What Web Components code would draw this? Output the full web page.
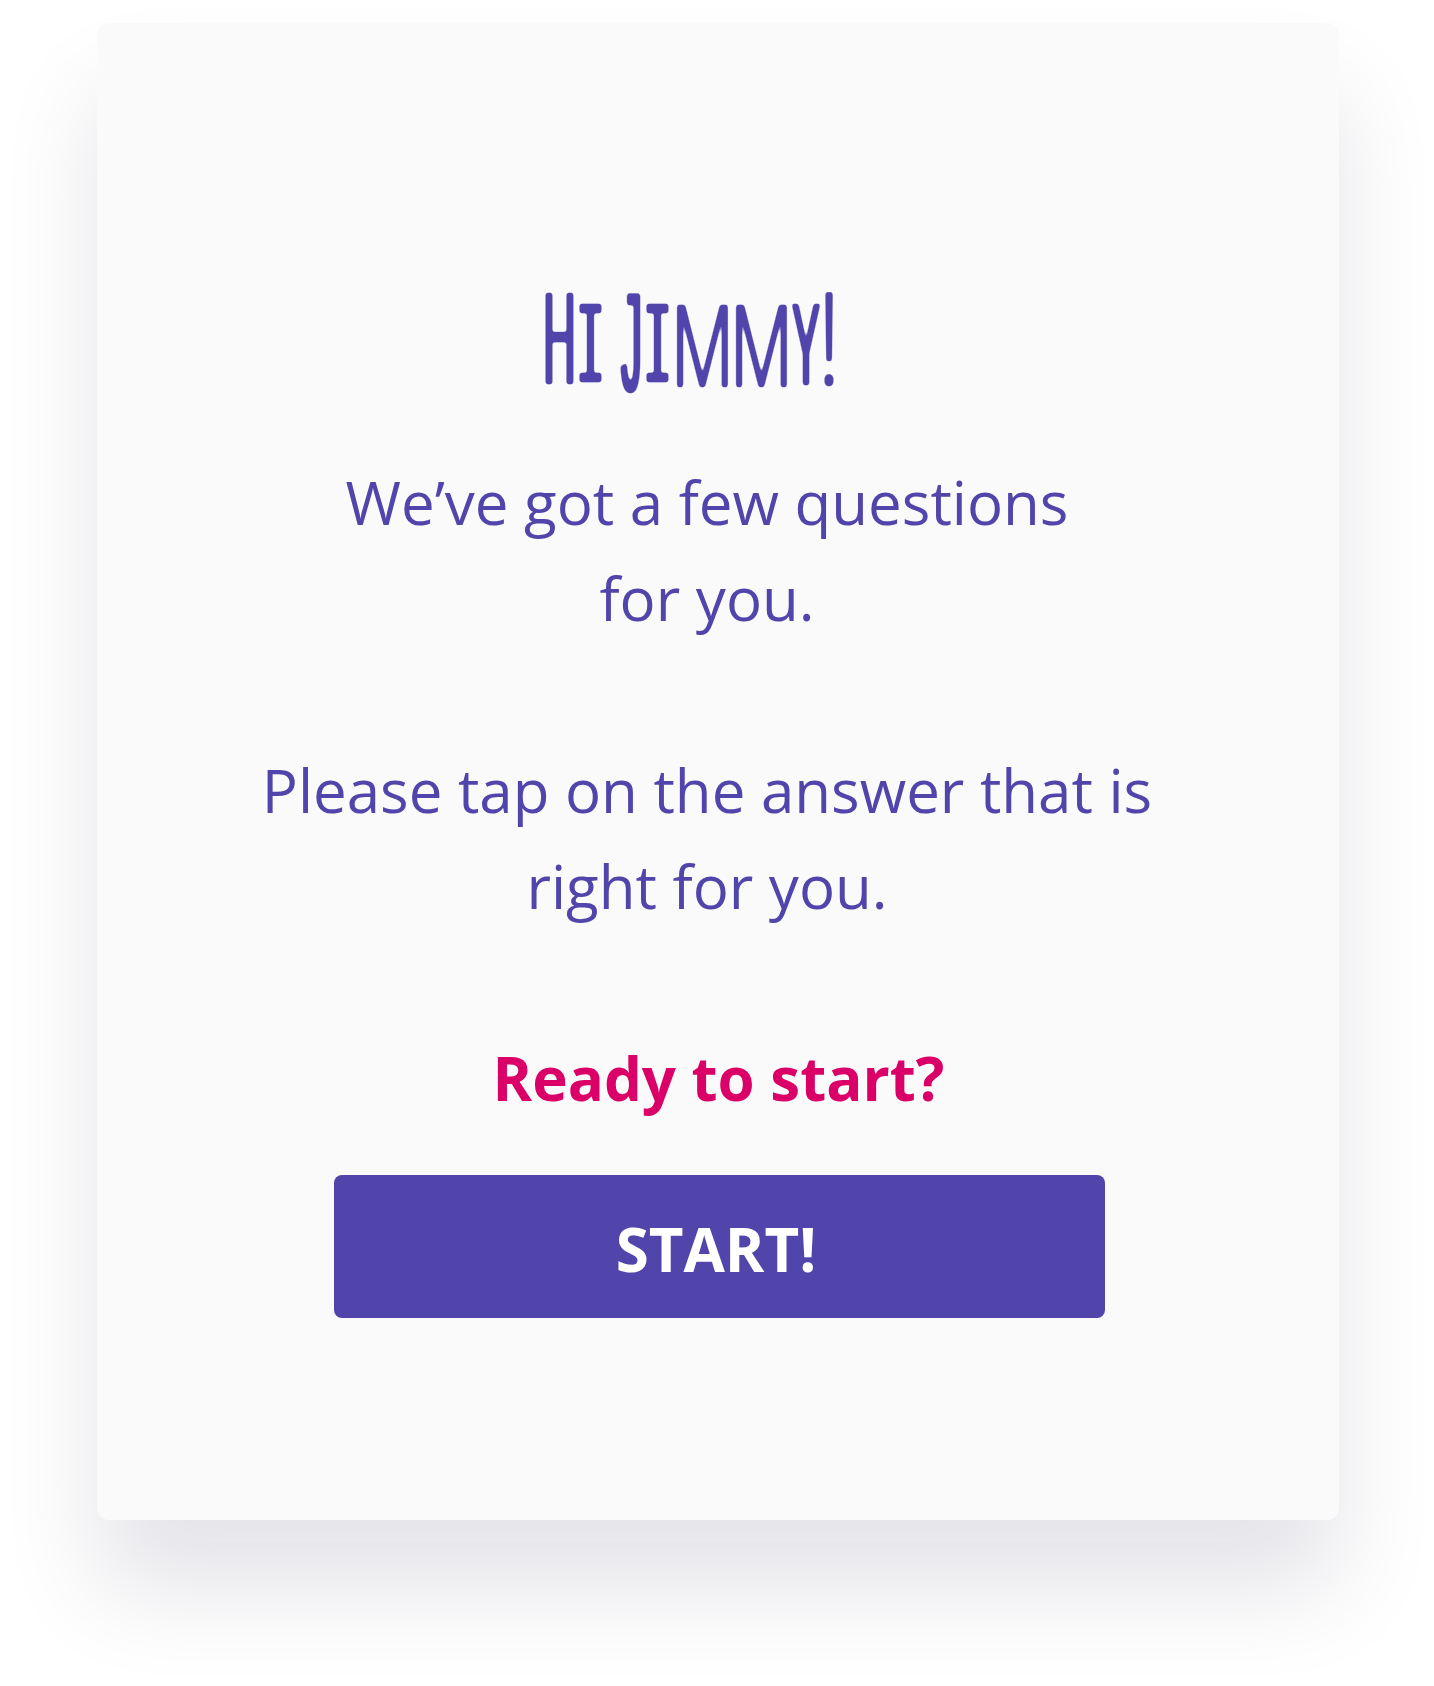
<!DOCTYPE html>
<html lang="en"><head><meta charset="utf-8"><title>Welcome</title>
<style>body{margin:0;background:#fff;font-family:"Open Sans",sans-serif}</style></head>
<body>
<welcome-card>
  <greeting-title></greeting-title>
  <intro-copy>
    <p>We’ve got a few questions<br>for you.</p>
    <p>Please tap on the answer that is<br>right for you.</p>
  </intro-copy>
  <ready-prompt>Ready to start?</ready-prompt>
  <start-button>START!</start-button>
</welcome-card>
<script>
class Base extends HTMLElement{
  constructor(){super();this.attachShadow({mode:'open'}).innerHTML=this.constructor.html;}
}
customElements.define('welcome-card',class extends Base{static html=`
<style>:host{display:block;height:1686px;box-sizing:border-box;padding:23px 95px 0 97px;overflow:hidden}
main{height:1496.5px;box-sizing:border-box;padding-top:207px;border-radius:12px;background:#fafafa;display:flex;flex-direction:column;align-items:center;box-shadow:0 70px 100px rgba(12,0,51,.108)}
</style><main><slot></slot></main>`});
customElements.define('greeting-title',class extends Base{static html=`
<style>:host{display:block;width:340px;height:220px;margin-right:56px}h1{margin:0;font-weight:400}svg{display:block;overflow:visible}
text{fill:#5145ab;font-family:"Open Sans",sans-serif;font-weight:300}
.s{text-transform:uppercase}.m{font-family:"Liberation Mono",monospace;font-weight:400}.t{font-family:Roboto,Inter,sans-serif;font-weight:300}</style>
<h1><svg width="340" height="220" viewBox="520 230 340 220">
<filter id="ink" filterUnits="userSpaceOnUse" x="520" y="230" width="340" height="220" color-interpolation-filters="sRGB"><feMorphology operator="dilate" radius="1 0"/><feGaussianBlur stdDeviation="1.5"/><feComponentTransfer><feFuncA type="linear" slope="3.2" intercept="-.85"/></feComponentTransfer><feComposite in2="SourceAlpha" operator="over" result="a"/><feFlood flood-color="#5145ab"/><feComposite in2="a" operator="in"/></filter>
<text y="384" filter="url(#ink)"><tspan class="t" x="543" font-size="128" textLength="33" lengthAdjust="spacingAndGlyphs" style="font-weight:400">H</tspan><tspan class="s m" x="576" y="382" font-size="118" textLength="29" lengthAdjust="spacingAndGlyphs">i</tspan> <tspan class="m" x="618" y="392" font-size="149" textLength="26" lengthAdjust="spacingAndGlyphs">J</tspan><tspan class="s m" x="643" y="382" font-size="118" textLength="29" lengthAdjust="spacingAndGlyphs">i</tspan><tspan class="s" x="671" y="387" font-size="114" textLength="63" lengthAdjust="spacingAndGlyphs">m</tspan><tspan class="s" x="730" y="387" font-size="114" textLength="63" lengthAdjust="spacingAndGlyphs">m</tspan><tspan class="s" x="793" y="385" font-size="114" textLength="26" lengthAdjust="spacingAndGlyphs" style="font-weight:400">y</tspan><tspan x="819" y="385" font-size="130" textLength="20" lengthAdjust="spacingAndGlyphs">!</tspan></text></svg></h1>`});
customElements.define('intro-copy',class extends Base{static html=`
<style>:host{display:flex;flex-direction:column;gap:96px;margin-top:4px;align-self:flex-start;width:1220px;text-align:center;font-size:60px;line-height:96px;color:#5145ab}
::slotted(p){margin:0}</style><slot></slot>`});
customElements.define('ready-prompt',class extends Base{static html=`
<style>:host{display:block;margin:96px 0 0 1px;font-size:60px;line-height:96px;font-weight:700;color:#da0068;white-space:nowrap}</style><slot></slot>`});
customElements.define('start-button',class extends Base{static html=`
<style>:host{display:block;margin:49px 0 0 3px}
button{display:block;width:770.5px;height:143px;border:0;border-radius:8px;background:#5145ab;color:#fff;font:700 60px/96px "Open Sans",sans-serif;padding:4px 7px 0 0}</style><button><slot></slot></button>`});
</script></body></html>
